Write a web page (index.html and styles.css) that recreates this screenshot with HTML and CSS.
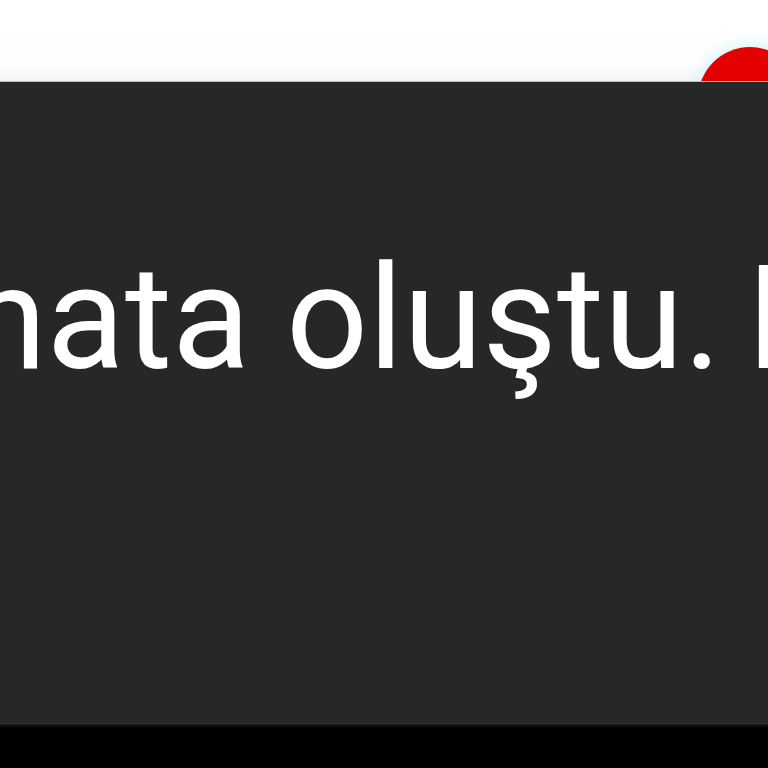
FILE: index.html
```html
<!DOCTYPE html>
<html lang="tr">
<head>
<meta charset="utf-8">
<title>Hata</title>
<link rel="stylesheet" href="styles.css">
</head>
<body>
<div class="page">
  <header class="topbar">
    <span class="record-dot"></span>
  </header>
  <main class="error-panel">
    <p class="error-text">Bir hata oluştu. <span class="error-hint">Lütfen daha sonra tekrar deneyin.</span></p>
  </main>
  <footer class="bottom-bar"></footer>
</div>
</body>
</html>
```
FILE: styles.css
```css
html, body {
  margin: 0;
  padding: 0;
  width: 768px;
  height: 768px;
  overflow: hidden;
  background: #000;
}
.page {
  display: flex;
  flex-direction: column;
  width: 768px;
  height: 768px;
}
.topbar {
  position: relative;
  height: 81px;
  flex: 0 0 81px;
  background: linear-gradient(#ffffff 0%, #fefefe 80%, #f4f4f4 100%);
  border-bottom: 1px solid #bdbdbd;
  overflow: hidden;
}
.record-dot {
  position: absolute;
  top: 47px;
  right: -34px;
  width: 104px;
  height: 104px;
  border-radius: 50%;
  background: #e50000;
  box-shadow: 0 0 14px 4px rgba(190, 240, 245, 0.6);
}
.error-panel {
  flex: 0 0 642px;
  height: 642px;
  background: #272727;
  box-sizing: border-box;
  padding-top: 165px;
  overflow: hidden;
  border-bottom: 1px solid #303030;
}
.error-text {
  margin: 0 0 0 -242px;
  font-family: Roboto, "Noto Sans", sans-serif;
  font-size: 144px;
  line-height: 1;
  color: #ffffff;
  white-space: nowrap;
}
.error-hint {
  margin-left: -10px;
}
.bottom-bar {
  flex: 1 1 auto;
  background: linear-gradient(#1a1a1a 0px, #000 4px, #000 100%);
}
```
